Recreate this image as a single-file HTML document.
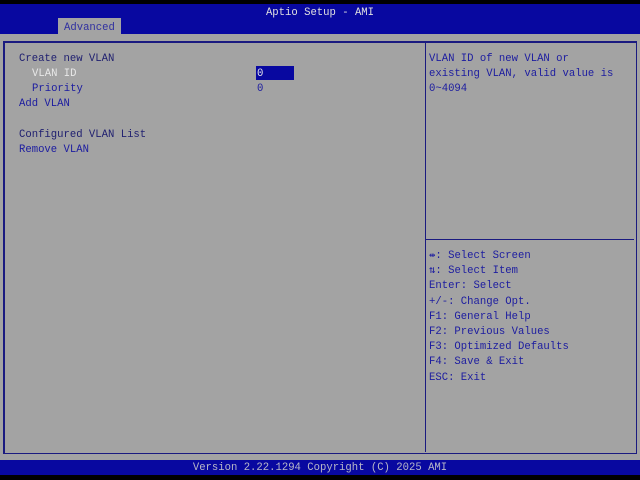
<!DOCTYPE html>
<html><head><style>
body{margin:0;width:640px;height:480px;background:#a3a3a3;position:relative;overflow:hidden;font-family:"Liberation Mono","DejaVu Sans Mono",monospace;font-size:10.6px;}
.a{position:absolute;white-space:pre;line-height:15px;}
.n{color:#202070}.b{color:#1c1ca0}.w{color:#e8e8e8}
</style></head><body>
<div style="position:absolute;left:0;top:0;width:640px;height:4px;background:#000"></div>
<div style="position:absolute;left:0;top:4px;width:640px;height:30px;background:#0808a0"></div>
<div class="a" style="left:0;width:640px;top:6px;text-align:center;color:#e0e0e0">Aptio Setup - AMI</div>
<div style="position:absolute;left:58px;top:18px;width:63px;height:16px;background:#a3a3a3"></div>
<div class="a" style="left:64px;top:21px;color:#3030a0">Advanced</div>
<div style="position:absolute;left:3px;top:41px;width:631px;height:410px;border:1px solid #1a1a80;border-width:2px 1px 1px 2px"></div>
<div style="position:absolute;left:425px;top:41px;width:1px;height:411px;background:#1a1a80"></div>
<div style="position:absolute;left:426px;top:239px;width:208px;height:1px;background:#1a1a80"></div>
<div class="a n" style="left:19px;top:52px">Create new VLAN</div>
<div class="a w" style="left:32px;top:67px">VLAN ID</div>
<div style="position:absolute;left:256px;top:66px;width:38px;height:14px;background:#0808a0"></div>
<div class="a w" style="left:257px;top:67px">0</div>
<div class="a b" style="left:32px;top:82px">Priority</div>
<div class="a b" style="left:257px;top:82px">0</div>
<div class="a b" style="left:19px;top:97px">Add VLAN</div>
<div class="a n" style="left:19px;top:128px">Configured VLAN List</div>
<div class="a b" style="left:19px;top:143px">Remove VLAN</div>
<div class="a b" style="left:429px;top:52px">VLAN ID of new VLAN or
existing VLAN, valid value is
0~4094</div>
<div class="a b" style="left:429px;top:249px;line-height:15.2px">⇹: Select Screen
⇅: Select Item
Enter: Select
+/-: Change Opt.
F1: General Help
F2: Previous Values
F3: Optimized Defaults
F4: Save &amp; Exit
ESC: Exit</div>
<div style="position:absolute;left:0;top:460px;width:640px;height:15px;background:#0808a0"></div>
<div class="a" style="left:0;width:640px;top:461px;text-align:center;color:#b8b8c8">Version 2.22.1294 Copyright (C) 2025 AMI</div>
<div style="position:absolute;left:0;top:475px;width:640px;height:5px;background:#000"></div>
</body></html>
